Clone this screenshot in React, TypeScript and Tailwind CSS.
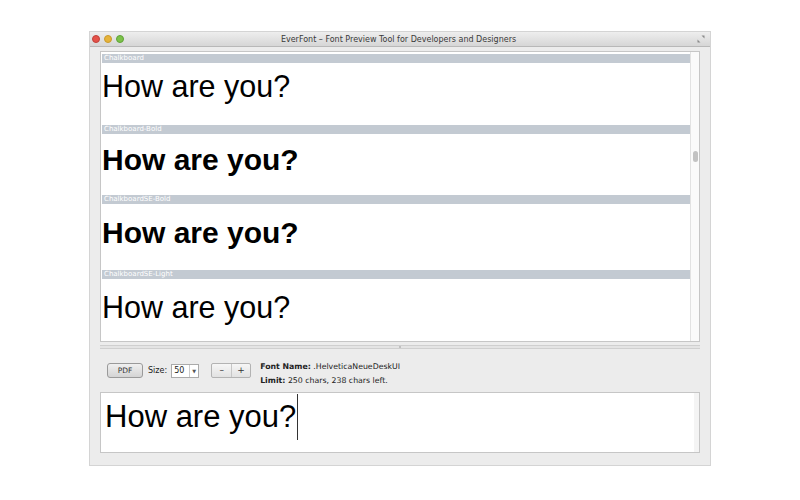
import React from "react";

const rows = [
  { name: "Chalkboard", bold: false, h: "h-[71px]", pad: "pt-[8px]" },
  { name: "Chalkboard-Bold", bold: true, h: "h-[70px]", pad: "pt-[10px]" },
  { name: "ChalkboardSE-Bold", bold: true, h: "h-[75px]", pad: "pt-[13px]" },
  { name: "ChalkboardSE-Light", bold: false, h: "h-[75px]", pad: "pt-[13px]" },
];

const App = () => {
  return (
    <div className="w-[800px] h-[500px] bg-white pl-[89px] pt-[31px] font-['DejaVu_Sans',sans-serif]">
      <div className="w-[622px] h-[435px] flex flex-col bg-[#ececec] border border-[#d4d4d4] overflow-hidden">
        {/* Title bar */}
        <div className="h-[15px] flex items-center relative bg-gradient-to-b from-[#eeeeee] to-[#d6d6d6] border-b border-[#b8b8b8]">
          <div className="flex gap-[4px] pl-[2px]">
            <span className="w-[8px] h-[8px] rounded-full bg-[#e5524a] border border-[#c0403a]"></span>
            <span className="w-[8px] h-[8px] rounded-full bg-[#e6b33a] border border-[#c99a2c]"></span>
            <span className="w-[8px] h-[8px] rounded-full bg-[#7cc24a] border border-[#5fa237]"></span>
          </div>
          <div className="flex-1 text-center text-[8px] text-[#3a3a3a] leading-[15px] pr-[24px]">
            EverFont – Font Preview Tool for Developers and Designers
          </div>
          <svg width="8" height="8" viewBox="0 0 8 8" className="mr-[5px]">
            <path d="M4.5 0.5 H7.5 V3.5 Z M0.5 4.5 V7.5 H3.5 Z" fill="#8a8a8a" />
          </svg>
        </div>

        {/* Content */}
        <div className="flex-1 flex flex-col px-[10px] pt-[4px] pb-[12px]">
          {/* Top preview list */}
          <div className="h-[291px] flex bg-white border border-[#c6c6c6]">
            <div className="flex-1 pl-[1px] pt-[2px] overflow-hidden">
              {rows.map((r) => (
                <div key={r.name} className={`${r.h} flex flex-col`}>
                  <div className="h-[9px] bg-[#c3cad2] text-white text-[7px] leading-[9px] pl-[2px]">
                    {r.name}
                  </div>
                  <div
                    className={`${r.pad} pl-0 leading-[31px] text-black font-['Liberation_Sans',sans-serif] ${
                      r.bold ? "font-bold text-[30px]" : "font-normal text-[30.5px]"
                    }`}
                  >
                    How are you?
                  </div>
                </div>
              ))}
            </div>
            <div className="w-[9px] border-l border-[#e2e2e2] bg-[#fafafa] flex flex-col items-center pt-[99px]">
              <div className="w-[5px] h-[11px] rounded-full bg-[#c2c2c2]"></div>
            </div>
          </div>

          {/* Splitter */}
          <div className="h-[7px] flex flex-col justify-end">
            <div className="h-[4px] border-t border-b border-[#cfcfcf] bg-[#e4e4e4] flex justify-center">
              <span className="w-[2px] h-[2px] bg-[#b5b5b5] rounded-full"></span>
            </div>
          </div>

          {/* Toolbar */}
          <div className="flex items-start pt-[11px] pl-[7px] h-[43px]">
            <div className="flex items-center mt-[3px]">
              <button className="w-[36px] h-[15px] rounded-[3px] border border-[#9a9a9a] bg-gradient-to-b from-[#f0f0f0] to-[#d4d4d4] text-[7.5px] text-[#333] leading-[13px] text-center">
                PDF
              </button>
              <span className="ml-[5px] text-[8px] text-[#222]">Size:</span>
              <div className="ml-[4px] w-[28px] h-[14px] flex bg-white border border-[#aaaaaa] text-[8px] text-[#222] leading-[12px]">
                <span className="flex-1 pl-[2px]">50</span>
                <span className="w-[9px] border-l border-[#cccccc] text-[5px] text-center text-[#555]">▼</span>
              </div>
              <div className="ml-[12px] flex h-[15px] border border-[#b3b3b3] bg-gradient-to-b from-[#f6f6f6] to-[#e2e2e2] rounded-[2px]">
                <span className="w-[19px] text-center text-[9px] leading-[13px] text-[#333]">–</span>
                <span className="w-[19px] text-center text-[9px] leading-[13px] text-[#333] border-l border-[#c6c6c6]">+</span>
              </div>
            </div>
            <div className="ml-[9px] flex flex-col text-[7.8px] leading-[14px] text-[#222]">
              <div>
                <span className="font-bold">Font Name:</span> .HelveticaNeueDeskUI
              </div>
              <div>
                <span className="font-bold">Limit:</span> 250 chars, 238 chars left.
              </div>
            </div>
          </div>

          {/* Input text */}
          <div className="flex-1 flex bg-white border border-[#c6c6c6]">
            <div className="flex-1 pl-[4px] pt-[1px]">
              <div className="flex items-start">
                <span className="text-[31px] leading-[46px] text-black font-['Liberation_Sans',sans-serif]">How are you?</span>
                <span className="w-[1px] h-[46px] bg-[#333] ml-[1px]"></span>
              </div>
            </div>
            <div className="w-[5px] bg-[#f4f4f4]"></div>
          </div>
        </div>
      </div>
    </div>
  );
};

export default App;
